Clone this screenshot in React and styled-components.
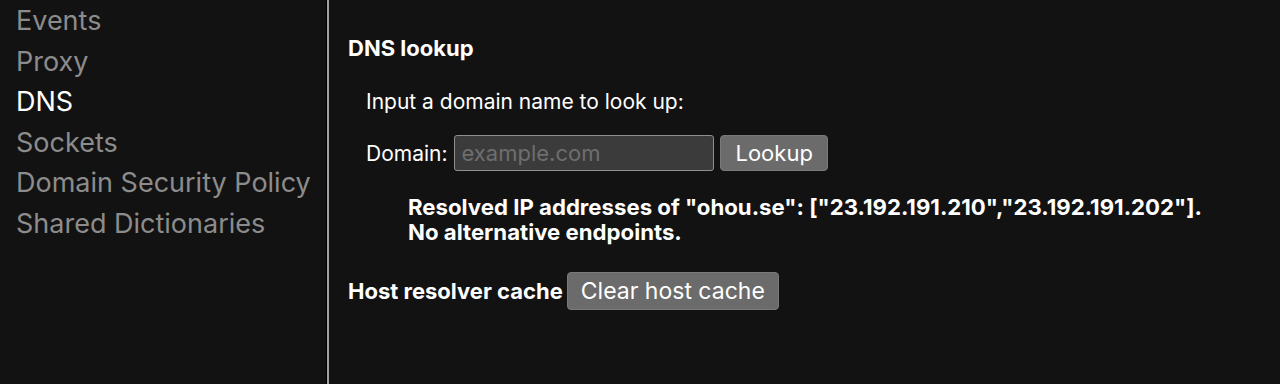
import React from 'react'
import styled, { createGlobalStyle } from 'styled-components'

const GlobalStyle = createGlobalStyle`
    html, body {
        margin: 0;
        background: #121212;
        height: 100%;
    }
    body {
        font-family: Inter, "Liberation Sans", sans-serif;
        color: #ffffff;
    }
    #root {
        height: 100%;
    }
`;

const Page = styled.div`
    display: flex;
    height: 384px;
    overflow: hidden;
`;

const Sidebar = styled.nav`
    width: 327px;
    flex: none;
    border-right: 1px solid #000;
    display: flex;
    flex-direction: column;
    padding: 1px 0 0 16px;
    box-sizing: border-box;
`;

const NavItem = styled.div`
    font-size: 27px;
    line-height: 40.6px;
    height: 40.6px;
    color: ${props => props.active ? '#ffffff' : '#8c8c8c'};
    white-space: nowrap;
`;

const Splitter = styled.div`
    width: 2px;
    flex: none;
    background: #a3a3a3;
`;

const Main = styled.main`
    flex: 1;
    padding: 35px 18px 0 19px;
    font-size: 21px;
`;

const Heading = styled.h2`
    margin: 0;
    font-size: 22px;
    font-weight: 700;
    line-height: 26px;
`;

const Block = styled.div`
    padding-left: 18px;
`;

const Prompt = styled.p`
    margin: 28px 0 0 0;
    line-height: 26px;
`;

const Row = styled.div`
    display: flex;
    align-items: center;
    margin-top: 20px;
    height: 36px;
`;

const Label = styled.span`
    margin-right: 7px;
`;

const DomainInput = styled.input`
    width: 260px;
    height: 36px;
    box-sizing: border-box;
    background: #3b3b3b;
    border: 1px solid #8f8f8f;
    border-radius: 3px;
    color: #fff;
    font-family: inherit;
    font-size: 22px;
    padding: 0 6px;
    outline: none;
    &::placeholder {
        color: #6e6e6e;
    }
`;

const Button = styled.button`
    height: ${props => props.tall ? '38px' : '36px'};
    margin-left: ${props => props.tall ? '4px' : '6px'};
    padding: 0 ${props => props.tall ? '13px' : '14px'};
    background: #6b6b6b;
    border: 1px solid #7a7a7a;
    border-radius: 4px;
    color: #fff;
    font-family: inherit;
    font-size: ${props => props.tall ? '23px' : '22px'};
    font-weight: 400;
    cursor: pointer;
`;

const Result = styled.div`
    margin: 23px 0 0 42px;
    font-size: 22.2px;
    font-weight: 700;
    line-height: 25px;
    white-space: nowrap;
`;

const CacheRow = styled.div`
    display: flex;
    align-items: center;
    margin-top: 28px;
    font-size: 22px;
    font-weight: 700;
`;

export default function App() {
    const items = ['Events', 'Proxy', 'DNS', 'Sockets', 'Domain Security Policy', 'Shared Dictionaries']
    return (
        <>
            <GlobalStyle />
            <Page>
                <Sidebar>
                    {items.map(x => <NavItem key={x} active={x === 'DNS'}>{x}</NavItem>)}
                </Sidebar>
                <Splitter />
                <Main>
                    <Heading>DNS lookup</Heading>
                    <Block>
                        <Prompt>Input a domain name to look up:</Prompt>
                        <Row>
                            <Label>Domain:</Label>
                            <DomainInput placeholder="example.com" />
                            <Button>Lookup</Button>
                        </Row>
                        <Result>
                            Resolved IP addresses of "ohou.se": ["23.192.191.210","23.192.191.202"].
                            <br />
                            No alternative endpoints.
                        </Result>
                    </Block>
                    <CacheRow>
                        Host resolver cache
                        <Button tall>Clear host cache</Button>
                    </CacheRow>
                </Main>
            </Page>
        </>
    )
}
